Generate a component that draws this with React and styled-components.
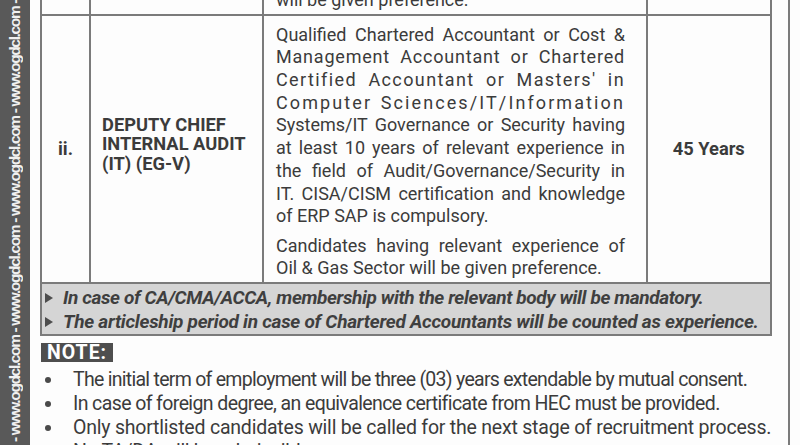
import React from 'react';
import styled, { createGlobalStyle } from 'styled-components';

const LINE = '#7b7b7b';
const INK = '#3b3b3b';

const GlobalStyle = createGlobalStyle`
  html, body {
    margin: 0;
    padding: 0;
    background: #fff;
  }
  body {
    width: 800px;
    height: 445px;
    overflow: hidden;
    font-family: Roboto, "Liberation Sans", sans-serif;
    color: ${INK};
  }
`;

const Page = styled.div`
  display: flex;
  width: 800px;
  height: 445px;
  overflow: hidden;
  background: #fdfdfd;
`;

const Strip = styled.div`
  flex: none;
  width: 30px;
  height: 445px;
  background: #595959;
  overflow: hidden;
  display: flex;
  justify-content: center;
`;

const StripText = styled.div`
  box-sizing: border-box;
  writing-mode: vertical-rl;
  transform: rotate(180deg);
  height: 445px;
  padding-top: 3px;
  overflow: hidden;
  white-space: nowrap;
  font-family: "Liberation Sans", Arial, sans-serif;
  font-size: 15.5px;
  font-weight: 700;
  line-height: 30px;
  letter-spacing: -1.35px;
  color: #f0f0f0;
`;

const Main = styled.div`
  flex: none;
  width: 732px;
  margin-left: 10px;
`;

const Rule = styled.div`
  flex: none;
  width: 2px;
  margin-left: 16px;
  background: ${LINE};
`;

const Table = styled.div`
  border-right: 2px solid ${LINE};
`;

const Row = styled.div`
  display: grid;
  grid-template-columns: 49px 173px 383.5px 1fr;
  grid-auto-rows: ${({ $h }) => ($h ? `${$h}px` : 'auto')};
  border-bottom: 2px solid ${LINE};
  overflow: hidden;
`;

const Cell = styled.div`
  border-left: 2px solid ${LINE};
  display: flex;
  flex-direction: column;
  justify-content: ${({ $bottom }) => ($bottom ? 'flex-end' : 'center')};
  align-items: ${({ $center }) => ($center ? 'center' : 'stretch')};
  padding: ${({ $pad }) => $pad || '0'};
  min-width: 0;
  overflow: hidden;
`;

const Strong = styled.div`
  font-size: 18.3px;
  font-weight: 700;
  line-height: 19.2px;
  color: ${INK};
`;

const Para = styled.div`
  flex: none;
  font-size: 18px;
  line-height: 22.7px;
  & + & {
    margin-top: 6.6px;
  }
`;

const Line = styled.span`
  display: block;
  text-align: ${({ $last }) => ($last ? 'left' : 'justify')};
  text-align-last: ${({ $last }) => ($last ? 'left' : 'justify')};
  letter-spacing: ${({ $ls }) => $ls || 0}px;
`;

const NoteBox = styled.div`
  background: #d5d5d5;
  border: 2px solid ${LINE};
  border-top: none;
  padding: 2px 0 0 3px;
`;

const NoteRow = styled.div`
  display: flex;
  align-items: center;
  height: 24px;
  font-size: 19px;
  font-weight: 700;
  font-style: italic;
  letter-spacing: ${({ $ls }) => $ls || 0}px;
  white-space: nowrap;
  color: #3f3f3f;
`;

const Arrow = styled.span`
  flex: none;
  width: 0;
  height: 0;
  border-top: 5.5px solid transparent;
  border-bottom: 5.5px solid transparent;
  border-left: 8px solid #4d4d4d;
  margin-right: 10px;
`;

const NoteLabel = styled.div`
  margin: 7px 0 0 1px;
  width: 72px;
  height: 19px;
  box-sizing: border-box;
  padding-left: 6px;
  background: #4e4e4e;
  color: #fff;
  font-size: 19.5px;
  font-weight: 700;
  line-height: 19px;
  letter-spacing: 1px;
`;

const Bullets = styled.ul`
  list-style: none;
  margin: 6px 0 0;
  padding: 0;
`;

const Bullet = styled.li`
  display: flex;
  align-items: center;
  height: 24px;
  font-size: 19.5px;
  white-space: nowrap;
  letter-spacing: ${({ $ls }) => $ls || 0}px;

  &::before {
    content: '';
    flex: none;
    width: 6px;
    height: 6px;
    border-radius: 50%;
    background: #4a4a4a;
    margin: 0 22px 0 5px;
  }
`;

const qualification = [
  [
    { t: 'Qualified Chartered Accountant or Cost &' },
    { t: 'Management Accountant or Chartered', ls: 0.8 },
    { t: "Certified Accountant or Masters' in", ls: 1.4 },
    { t: 'Computer Sciences/IT/Information', ls: 2.1 },
    { t: 'Systems/IT Governance or Security having' },
    { t: 'at least 10 years of relevant experience in' },
    { t: 'the field of Audit/Governance/Security in' },
    { t: 'IT. CISA/CISM certification and knowledge' },
    { t: 'of ERP SAP is compulsory.', last: true },
  ],
  [
    { t: 'Candidates having relevant experience of' },
    { t: 'Oil & Gas Sector will be given preference.', last: true },
  ],
];

const notes = [
  { t: 'In case of CA/CMA/ACCA, membership with the relevant body will be mandatory.', ls: -0.38 },
  { t: 'The articleship period in case of Chartered Accountants will be counted as experience.', ls: -0.26 },
];

const bullets = [
  { t: 'The initial term of employment will be three (03) years extendable by mutual consent.', ls: -0.72 },
  { t: 'In case of foreign degree, an equivalence certificate from HEC must be provided.', ls: -0.6 },
  { t: 'Only shortlisted candidates will be called for the next stage of recruitment process.', ls: -0.21 },
  { t: 'No TA/DA will be admissible.', ls: -0.3 },
];

const stripText = Array(6).fill('- www.ogdcl.com ').join('');

export default function App() {
  return (
    <>
      <GlobalStyle />
      <Page>
        <Strip>
          <StripText>{stripText}</StripText>
        </Strip>

        <Main>
          <Table>
            <Row $h={14}>
              <Cell />
              <Cell />
              <Cell $bottom $pad="0 20.5px 2.3px 12px">
                <Para>
                  <Line $last>will be given preference.</Line>
                </Para>
              </Cell>
              <Cell />
            </Row>

            <Row>
              <Cell $center>
                <Strong>ii.</Strong>
              </Cell>
              <Cell $pad="0 8px 10px 11px">
                <Strong>DEPUTY CHIEF</Strong>
                <Strong>INTERNAL AUDIT</Strong>
                <Strong>(IT) (EG-V)</Strong>
              </Cell>
              <Cell $pad="7.6px 20.5px 2px 12px">
                {qualification.map((para, i) => (
                  <Para key={i}>
                    {para.map((l) => (
                      <Line key={l.t} $ls={l.ls} $last={l.last}>
                        {l.t}
                      </Line>
                    ))}
                  </Para>
                ))}
              </Cell>
              <Cell $center>
                <Strong>45 Years</Strong>
              </Cell>
            </Row>
          </Table>

          <NoteBox>
            {notes.map((n) => (
              <NoteRow key={n.t} $ls={n.ls}>
                <Arrow />
                {n.t}
              </NoteRow>
            ))}
          </NoteBox>

          <NoteLabel>NOTE:</NoteLabel>

          <Bullets>
            {bullets.map((b) => (
              <Bullet key={b.t} $ls={b.ls}>
                {b.t}
              </Bullet>
            ))}
          </Bullets>
        </Main>

        <Rule />
      </Page>
    </>
  );
}
